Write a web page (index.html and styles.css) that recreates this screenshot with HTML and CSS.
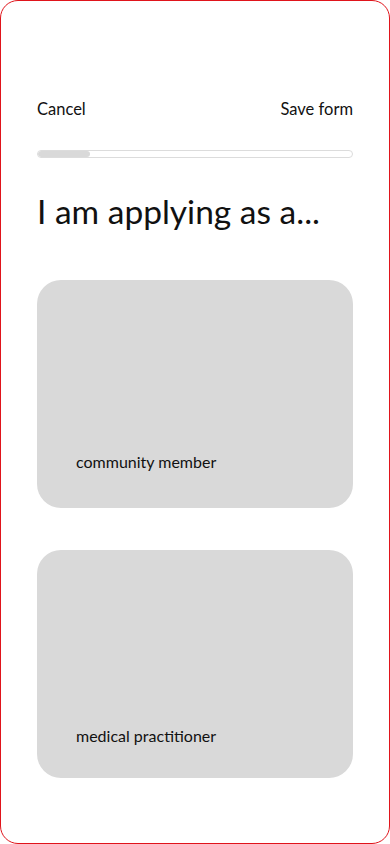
FILE: index.html
```html
<!DOCTYPE html>
<html lang="en">
<head>
    <meta charset="UTF-8">
    <meta name="viewport" content="width=device-width, initial-scale=1.0">
    <title>Application type</title>
    <link rel="stylesheet" href="styles.css">
</head>
<body>
    <div class="screen">
        <header class="top-bar">
            <a href="#" class="top-link">Cancel</a>
            <a href="#" class="top-link">Save form</a>
        </header>

        <div class="progress">
            <div class="progress-fill"></div>
        </div>

        <h1 class="title">I am applying as a...</h1>

        <div class="options">
            <button class="option-card">
                <span class="option-label">community member</span>
            </button>
            <button class="option-card option-card--low">
                <span class="option-label">medical practitioner</span>
            </button>
        </div>
    </div>
</body>
</html>
```

FILE: styles.css
```css
:root {
    --card-gray: #d9d9d9;
    --frame-red: #e0141b;
    --text: #111;
}

* {
    box-sizing: border-box;
}

body {
    margin: 0;
    font-family: Lato, 'Noto Sans', sans-serif;
    color: var(--text);
    background: #fff;
}

.screen {
    width: 390px;
    height: 844px;
    border: 1px solid var(--frame-red);
    border-radius: 18px;
    padding: 97px 36px 0;
    display: flex;
    flex-direction: column;
}

.top-bar {
    display: flex;
    justify-content: space-between;
    align-items: center;
}

.top-link {
    color: var(--text);
    text-decoration: none;
    font-size: 16.5px;
    line-height: 22px;
}

.progress {
    margin-top: 30px;
    height: 8px;
    border: 1px solid #dcdcdc;
    border-radius: 4px;
    overflow: hidden;
}

.progress-fill {
    width: 52px;
    height: 100%;
    background: var(--card-gray);
    border-radius: 4px;
}

.title {
    margin: 33px 0 0;
    font-size: 33.5px;
    font-weight: 400;
    line-height: 40px;
}

.options {
    margin-top: 49px;
    display: flex;
    flex-direction: column;
    gap: 42px;
}

.option-card {
    height: 228px;
    border: none;
    border-radius: 24px;
    background: var(--card-gray);
    display: flex;
    align-items: flex-end;
    padding: 0 39px 35px;
    font-family: inherit;
    cursor: pointer;
    text-align: left;
}

.option-card--low {
    padding-bottom: 31px;
}

.option-label {
    font-size: 16px;
    line-height: 22px;
    color: var(--text);
}
```
